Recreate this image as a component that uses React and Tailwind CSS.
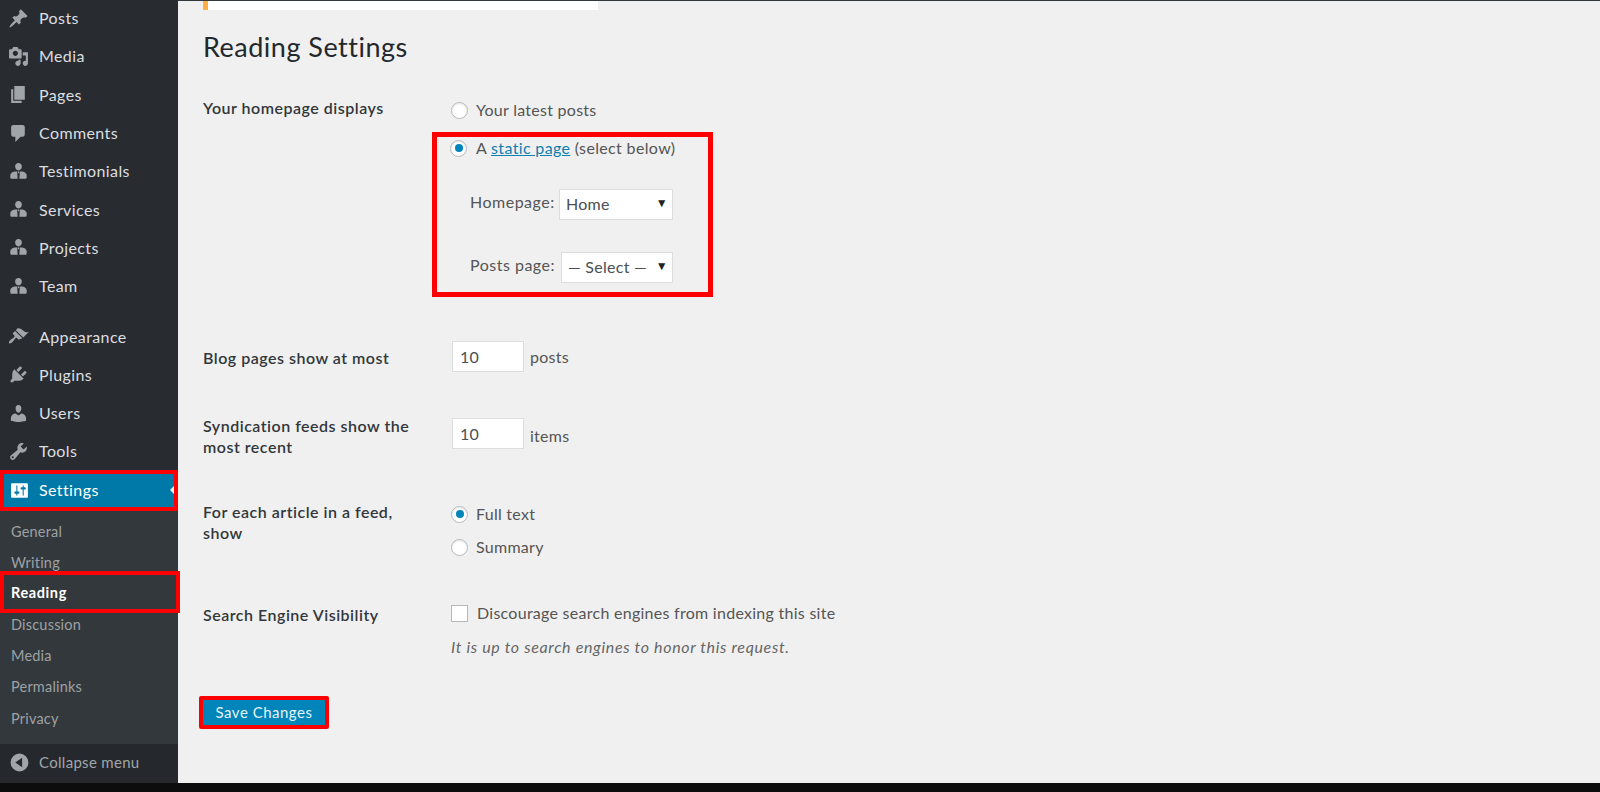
import React from 'react';

const icons = {
  pin: 'M10.44 3.02l1.82-1.82 6.36 6.35-1.83 1.82c-1.05-.68-2.48-.57-3.41.36l-.75.75c-.92.93-1.04 2.35-.35 3.41l-1.83 1.82-2.41-2.41-2.8 2.79c-.42.42-3.38 2.71-3.8 2.29s1.86-3.39 2.28-3.81l2.79-2.79L4.1 9.36l1.83-1.82c1.05.69 2.48.57 3.4-.36l.75-.75c.93-.92 1.05-2.35.36-3.41z',
  media: 'M13 11V4c0-.55-.45-1-1-1h-1.67L9 1H5L3.67 3H2c-.55 0-1 .45-1 1v7c0 .55.45 1 1 1h10c.55 0 1-.45 1-1zM7 4.5c1.38 0 2.5 1.12 2.5 2.5S8.38 9.5 7 9.5 4.5 8.38 4.5 7 5.62 4.5 7 4.5zM14 6h5v10.5c0 1.38-1.12 2.5-2.5 2.5S14 17.88 14 16.5s1.12-2.5 2.5-2.5c.17 0 .34.02.5.05V9h-3V6zm-4 8.05V13h2v3.5c0 1.38-1.12 2.5-2.5 2.5S7 17.88 7 16.5 8.12 14 9.5 14c.17 0 .34.02.5.05z',
  page: 'M6 15V2h10v13H6zm-1 1h8v2H3V5h2v11z',
  comment: 'M5 2h9c1.1 0 2 .9 2 2v7c0 1.1-.9 2-2 2h-2l-5 5v-5H5c-1.1 0-2-.9-2-2V4c0-1.1.9-2 2-2z',
  man: 'M10 2c1.9 0 3.200 1.400 3.200 3.300S11.900 9 10 9 6.800 7.200 6.800 5.300 8.100 2 10 2zM7.500 10h1.200l.5 7H3.500c-.8 0-1.300-.5-1.300-1.300v-2C2.200 11.500 4.800 10 7.500 10zM11.300 10h1.200c2.700 0 5.300 1.500 5.300 3.700v2c0 .8-.5 1.300-1.300 1.300h-5.700zM9.200 10h1.600l-.3 1.600h-1z',
  brush: 'M14.480 11.060L7.410 3.990l1.500-1.500c.5-.56 2.300-.47 3.510.32 1.210.8 1.430 1.280 2.910 2.100 1.180.64 2.450 1.260 4.450.85zm-.71.71L6.700 4.700 4.930 6.470c-.39.39-.39 1.020 0 1.410l1.060 1.060c.39.39.39 1.030 0 1.420-.6.6-1.430 1.110-2.210 1.690-.35.26-.7.53-1.010.84-1.340 1.340-2.370 2.860-1.670 3.560s2.220-.33 3.560-1.670c.31-.31.58-.66.84-1.010.58-.78 1.090-1.610 1.690-2.210.39-.39 1.020-.39 1.410 0l1.060 1.060c.39.39 1.020.39 1.410 0z',
  plug: 'M13.110 4.360L9.870 7.600 8 5.730l3.240-3.240c.35-.34 1.050-.2 1.560.32.52.51.66 1.210.31 1.550zm-8 1.770l.91-1.120 9.010 9.010-1.190.84c-.71.71-2.630 1.160-3.820 1.160H6.140L4.900 17.260c-.59.59-1.540.59-2.120 0-.59-.58-.59-1.530 0-2.120l1.240-1.240v-3.880c0-1.130.4-3.190 1.090-3.890zm7.260 3.970l3.240-3.240c.34-.35 1.040-.21 1.550.31.52.51.66 1.210.31 1.550l-3.240 3.250z',
  user: 'M10 9.250c-2.270 0-2.730-3.440-2.730-3.440C7 4.020 7.820 2 9.970 2c2.160 0 2.980 2.020 2.710 3.810 0 0-.41 3.440-2.680 3.440zm0 2.570L12.720 10c2.390 0 4.520 2.330 4.520 4.530v2.490s-3.650 1.130-7.240 1.130c-3.650 0-7.240-1.130-7.240-1.130v-2.490c0-2.250 1.940-4.480 4.470-4.480z',
  tools: 'M16.680 9.770c-1.340 1.340-3.300 1.670-4.950.99l-5.410 6.520c-.99.99-2.590.99-3.580 0s-.99-2.590 0-3.570l6.520-5.420c-.68-1.650-.35-3.610.99-4.950 1.280-1.280 3.120-1.620 4.720-1.060l-2.890 2.890 2.820 2.820 2.860-2.870c.53 1.580.18 3.390-1.080 4.650zM3.810 16.210c.4.39 1.040.39 1.430 0 .4-.4.4-1.040 0-1.430-.39-.4-1.030-.4-1.430 0-.39.39-.39 1.030 0 1.430z',
  settings: 'M18 16V4c0-.55-.45-1-1-1H3c-.55 0-1 .45-1 1v12c0 .55.45 1 1 1h14c.55 0 1-.45 1-1zM8 11h1c.55 0 1 .45 1 1s-.45 1-1 1H8v1.500c0 .28-.22.5-.5.5s-.5-.22-.5-.5V13H6c-.55 0-1-.45-1-1s.45-1 1-1h1V5.500c0-.28.22-.5.5-.5s.5.22.5.5V11zm5-2h-1c-.55 0-1-.45-1-1s.45-1 1-1h1V5.500c0-.28.22-.5.5-.5s.5.22.5.5V7h1c.55 0 1 .45 1 1s-.45 1-1 1h-1v5.500c0 .28-.22.5-.5.5s-.5-.22-.5-.5V9z',
  collapse: 'M10 1.500a8.500 8.500 0 1 1 0 17 8.500 8.500 0 0 1 0-17zM12.500 5.500L6 10l6.500 4.500z',
};

const Icon = ({ name, className = 'text-[#a0a5aa]' }) => (
  <svg viewBox="0 0 20 20" className={`w-[21px] h-[21px] shrink-0 fill-current ${className}`} fillRule="evenodd">
    <path d={icons[name]} />
  </svg>
);

const MenuItem = ({ icon, label }) => (
  <li className="h-[38.3px] flex items-center pl-[8px]">
    <Icon name={icon} />
    <span className="ml-[10px]">{label}</span>
  </li>
);

const Sidebar = () => (
  <div className="w-[178px] shrink-0 bg-[#282c31] text-[#dcdee0] text-[16px] tracking-[0.4px] flex flex-col">
    <ul className="-mt-[1px]">
      <MenuItem icon="pin" label="Posts" />
      <MenuItem icon="media" label="Media" />
      <MenuItem icon="page" label="Pages" />
      <MenuItem icon="comment" label="Comments" />
      <MenuItem icon="man" label="Testimonials" />
      <MenuItem icon="man" label="Services" />
      <MenuItem icon="man" label="Projects" />
      <MenuItem icon="man" label="Team" />
    </ul>
    <ul className="mt-[12px]">
      <MenuItem icon="brush" label="Appearance" />
      <MenuItem icon="plug" label="Plugins" />
      <MenuItem icon="user" label="Users" />
      <MenuItem icon="tools" label="Tools" />
    </ul>
    <div className="-mt-[1px] h-[41px] border-[4px] border-[#ff0000] bg-[#0079a8] text-white flex items-center pl-[5px] relative">
      <Icon name="settings" className="text-white" />
      <span className="ml-[9px]">Settings</span>
      <span className="absolute right-0 top-[12px] border-y-[4px] border-r-[4px] border-y-transparent border-r-[#f1f1f1]"></span>
    </div>
    <ul className="flex-1 bg-[#33383c] text-[#9da1a5] text-[14.5px] tracking-[0.2px] pt-[6px]">
      {['General', 'Writing'].map((s) => (
        <li key={s} className="h-[31.2px] flex items-center pl-[11px]">{s}</li>
      ))}
      <li className="h-[42px] -mt-[8px] -mb-[3.6px] pt-[1px] w-[180px] relative border-[4px] border-[#ff0000] flex items-center pl-[7px] text-white font-bold tracking-[0.6px]">Reading</li>
      {['Discussion', 'Media', 'Permalinks', 'Privacy'].map((s) => (
        <li key={s} className="h-[31.2px] flex items-center pl-[11px]">{s}</li>
      ))}
    </ul>
    <div className="h-[39px] bg-[#25292d] text-[#a0a5aa] text-[15px] tracking-[0.3px] flex items-center pl-[9px] pb-[2px]">
      <Icon name="collapse" />
      <span className="ml-[9px]">Collapse menu</span>
    </div>
  </div>
);

const Radio = ({ checked }) => (
  <span className="w-[17px] h-[17px] shrink-0 rounded-full bg-white border border-[#b4b9be] shadow-[inset_0_1px_2px_rgba(0,0,0,0.1)] flex items-center justify-center">
    {checked && <span className="w-[8px] h-[8px] rounded-full bg-[#0085ba]"></span>}
  </span>
);

const Select = ({ value, className }) => (
  <div className={`h-[31px] bg-white border border-[#dddddd] text-[#4a4f54] flex items-center justify-between pl-[6px] pr-[4px] ${className}`}>
    <span className="pb-[2px]">{value}</span>
    <span className="text-[12px] text-[#222222] pb-[3px]">▼</span>
  </div>
);

const NumberBox = ({ value }) => (
  <div className="w-[72px] h-[31px] bg-white border border-[#dddddd] text-[#4a4f54] flex items-center pl-[7px]">{value}</div>
);

const Label = ({ children, className = '' }) => (
  <div className={`w-[249px] shrink-0 font-semibold text-[#32373c] tracking-[0.5px] ${className}`}>{children}</div>
);

const Content = () => (
  <div className="flex-1 bg-[#f0f0f0] border-t border-[#32373c] text-[#555555] text-[16px] tracking-[0.27px] pl-[25px]">
    <div className="w-[395px] h-[9px] bg-white border-l-[5px] border-[#ffb040]"></div>
    <h1 className="mt-[21px] text-[27px] tracking-[0.5px] leading-[32px] text-[#23282d]">Reading Settings</h1>

    <div className="flex mt-[36px]">
      <Label className="leading-[22px] -mt-[2px]">Your homepage displays</Label>
      <div className="flex-1 -ml-[1px]">
        <div className="flex items-center gap-[8px] h-[22px]">
          <Radio />
          <span>Your latest posts</span>
        </div>
        <div className="-ml-[19px] mt-[11px] w-[281px] h-[165px] border-[5px] border-[#ff0000] pl-[13px]">
          <div className="flex items-center gap-[9px] h-[22px] tracking-[0.35px]">
            <Radio checked />
            <span>A <span className="text-[#0e7fae] underline">static page</span> (select below)</span>
          </div>
          <div className="flex items-center mt-[30px] ml-[20px] h-[31px]">
            <span className="w-[89px] pb-[5px] tracking-[0.5px]">Homepage:</span>
            <Select value="Home" className="w-[114px]" />
          </div>
          <div className="flex items-center mt-[32px] ml-[20px] h-[31px]">
            <span className="w-[91px] pb-[5px] tracking-[0.5px]">Posts page:</span>
            <Select value="— Select —" className="w-[112px]" />
          </div>
        </div>
      </div>
    </div>

    <div className="flex mt-[44px] items-center">
      <Label className="pt-[3px]">Blog pages show at most</Label>
      <NumberBox value="10" />
      <span className="ml-[6px]">posts</span>
    </div>

    <div className="flex mt-[46px]">
      <Label className="leading-[21px] -mt-[3px]">Syndication feeds show the<br />most recent</Label>
      <NumberBox value="10" />
      <span className="ml-[6px] leading-[31px] mt-[2px]">items</span>
    </div>

    <div className="flex mt-[45px]">
      <Label className="leading-[21px] -mt-[1px]">For each article in a feed,<br />show</Label>
      <div className="-ml-[1px]">
        <div className="flex items-center gap-[8px] h-[22px] mt-[1px]">
          <Radio checked />
          <span>Full text</span>
        </div>
        <div className="flex items-center gap-[8px] h-[22px] mt-[11px]">
          <Radio />
          <span>Summary</span>
        </div>
      </div>
    </div>

    <div className="flex mt-[46px]">
      <Label className="leading-[22px]">Search Engine Visibility</Label>
      <div className="-ml-[1px]">
        <div className="flex items-center gap-[9px] h-[22px] -mt-[2px]">
          <span className="w-[17px] h-[17px] bg-white border border-[#b4b9be]"></span>
          <span>Discourage search engines from indexing this site</span>
        </div>
        <p className="italic text-[#666666] mt-[12px] text-[16px] leading-[22px] tracking-[0.65px]">It is up to search engines to honor this request.</p>
      </div>
    </div>

    <div className="mt-[38px] -ml-[4px] w-[130px] h-[33px] border-[4px] border-[#ff0000] rounded-[2px] bg-[#0085ba] text-[#e6f3f8] text-[15px] tracking-[0.5px] flex items-center justify-center">Save Changes</div>
  </div>
);

export default function App() {
  return (
    <div className="w-[1600px] h-[792px] overflow-hidden flex flex-col font-['Lato','Noto_Sans',sans-serif]">
      <div className="flex-1 min-h-0 flex">
        <Sidebar />
        <Content />
      </div>
      <div className="h-[9px] bg-[#0d0d0d]"></div>
    </div>
  );
}
